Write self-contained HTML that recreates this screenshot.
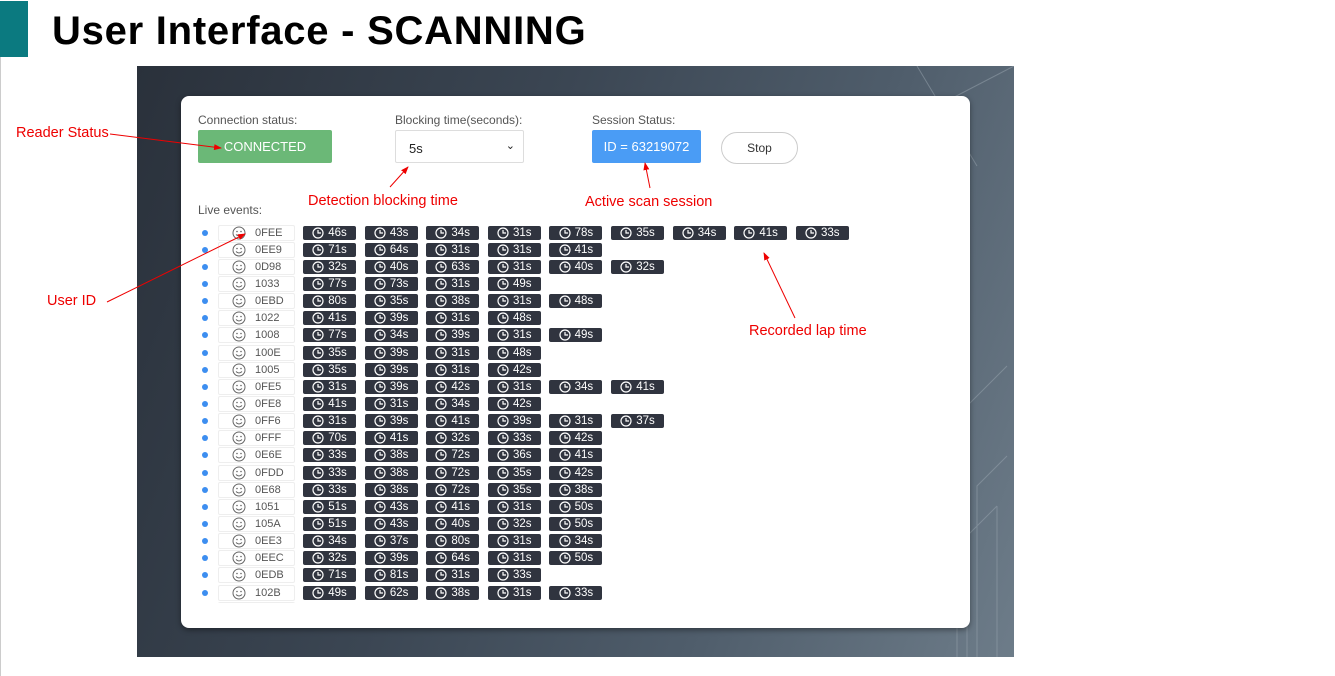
<!DOCTYPE html>
<html><head><meta charset="utf-8"><style>
*{margin:0;padding:0;box-sizing:border-box}
body{width:1335px;height:676px;background:#fff;position:relative;overflow:hidden;font-family:"Liberation Sans",Arial,sans-serif}
.bar{position:absolute;left:0;top:1px;width:28px;height:56px;background:#0b7a80}
.lline{position:absolute;left:0;top:57px;width:1px;height:619px;background:#ccc}
h1{position:absolute;left:52px;top:9px;font-size:40px;font-weight:bold;color:#000;letter-spacing:0.75px}
.bg{position:absolute;left:137px;top:66px;width:877px;height:591px;background:linear-gradient(110deg,#2a313b 0%,#3b4653 40%,#4f5d6b 70%,#6d7c89 100%);overflow:hidden}
.card{position:absolute;left:181px;top:96px;width:789px;height:532px;background:#fff;border-radius:8px;box-shadow:0 2px 6px rgba(0,0,0,.4)}
.lbl{position:absolute;font-size:12px;color:#555}
.btn{position:absolute;color:#fff;font-size:13px;display:flex;align-items:center;justify-content:center;border-radius:2px}
.rows{position:absolute;left:197px;top:224px;width:700px;height:379px;overflow:hidden}
.row{height:17.15px;display:flex;align-items:center}
.dot{width:6px;height:6px;border-radius:50%;background:#3d8ef0;margin-left:5px;margin-right:10px}
.id{width:77px;height:16px;border:1px solid #eee;border-radius:2px;display:flex;align-items:center;font-size:11px;color:#555;margin-right:8px}
.id svg{margin-left:13px;margin-right:9px}
.c{width:53px;height:14px;background:#30343f;border-radius:2px;color:#fff;font-size:11.5px;display:flex;align-items:center;justify-content:center;margin-right:8.6px;gap:4px}
.ann{position:absolute;color:#e00;font-size:14.5px}
</style></head><body>
<div class="bar"></div><div class="lline"></div>
<h1>User Interface - SCANNING</h1>
<div class="bg">
<svg width="877" height="591" style="position:absolute;left:0;top:0" stroke="#9aa6b0" stroke-width="1" fill="none" opacity=".5">
<path d="M840 591V420l30-30M860 591V440M800 40L877 0M780 0l60 100M820 591V480l40-40M870 300l-40 40v251"/>
</svg>
</div>
<div class="card">
<div class="lbl" style="left:17px;top:17px">Connection status:</div>
<div class="btn" style="left:17px;top:34px;width:134px;height:33px;background:#6bb877">CONNECTED</div>
<div class="lbl" style="left:214px;top:17px">Blocking time(seconds):</div>
<div style="position:absolute;left:214px;top:34px;width:129px;height:33px;border:1px solid #ddd;border-radius:2px;font-size:13px;color:#222;padding:10px 0 0 13px">5s<span style="position:absolute;right:8px;top:8px;font-size:11px">&#8964;</span></div>
<div class="lbl" style="left:411px;top:17px">Session Status:</div>
<div class="btn" style="left:411px;top:34px;width:109px;height:33px;background:#4a9cf5">ID = 63219072</div>
<div style="position:absolute;left:540px;top:36px;width:77px;height:32px;border:1px solid #ccc;border-radius:16px;font-size:12px;color:#333;display:flex;align-items:center;justify-content:center">Stop</div>
<div class="lbl" style="left:17px;top:107px">Live events:</div>
</div>
<svg width="0" height="0" style="position:absolute"><defs>
<symbol id="k" viewBox="0 0 12 12"><circle cx="6" cy="6" r="5" fill="none" stroke="#fff" stroke-width="1.2"/><path d="M6 3v3h3" fill="none" stroke="#fff" stroke-width="1.2"/></symbol>
<symbol id="f" viewBox="0 0 14 14"><circle cx="7" cy="7" r="6" fill="none" stroke="#666" stroke-width="1"/><circle cx="5" cy="5.5" r=".8" fill="#666"/><circle cx="9" cy="5.5" r=".8" fill="#666"/><path d="M4 8.5q3 3 6 0" fill="none" stroke="#666"/></symbol>
</defs></svg>
<div class="rows">
<div class="row"><i class="dot"></i><div class="id"><svg width="14" height="14"><use href="#f"/></svg>0FEE</div><div class="c"><svg width="12" height="12"><use href="#k"/></svg>46s</div><div class="c"><svg width="12" height="12"><use href="#k"/></svg>43s</div><div class="c"><svg width="12" height="12"><use href="#k"/></svg>34s</div><div class="c"><svg width="12" height="12"><use href="#k"/></svg>31s</div><div class="c"><svg width="12" height="12"><use href="#k"/></svg>78s</div><div class="c"><svg width="12" height="12"><use href="#k"/></svg>35s</div><div class="c"><svg width="12" height="12"><use href="#k"/></svg>34s</div><div class="c"><svg width="12" height="12"><use href="#k"/></svg>41s</div><div class="c"><svg width="12" height="12"><use href="#k"/></svg>33s</div></div>
<div class="row"><i class="dot"></i><div class="id"><svg width="14" height="14"><use href="#f"/></svg>0EE9</div><div class="c"><svg width="12" height="12"><use href="#k"/></svg>71s</div><div class="c"><svg width="12" height="12"><use href="#k"/></svg>64s</div><div class="c"><svg width="12" height="12"><use href="#k"/></svg>31s</div><div class="c"><svg width="12" height="12"><use href="#k"/></svg>31s</div><div class="c"><svg width="12" height="12"><use href="#k"/></svg>41s</div></div>
<div class="row"><i class="dot"></i><div class="id"><svg width="14" height="14"><use href="#f"/></svg>0D98</div><div class="c"><svg width="12" height="12"><use href="#k"/></svg>32s</div><div class="c"><svg width="12" height="12"><use href="#k"/></svg>40s</div><div class="c"><svg width="12" height="12"><use href="#k"/></svg>63s</div><div class="c"><svg width="12" height="12"><use href="#k"/></svg>31s</div><div class="c"><svg width="12" height="12"><use href="#k"/></svg>40s</div><div class="c"><svg width="12" height="12"><use href="#k"/></svg>32s</div></div>
<div class="row"><i class="dot"></i><div class="id"><svg width="14" height="14"><use href="#f"/></svg>1033</div><div class="c"><svg width="12" height="12"><use href="#k"/></svg>77s</div><div class="c"><svg width="12" height="12"><use href="#k"/></svg>73s</div><div class="c"><svg width="12" height="12"><use href="#k"/></svg>31s</div><div class="c"><svg width="12" height="12"><use href="#k"/></svg>49s</div></div>
<div class="row"><i class="dot"></i><div class="id"><svg width="14" height="14"><use href="#f"/></svg>0EBD</div><div class="c"><svg width="12" height="12"><use href="#k"/></svg>80s</div><div class="c"><svg width="12" height="12"><use href="#k"/></svg>35s</div><div class="c"><svg width="12" height="12"><use href="#k"/></svg>38s</div><div class="c"><svg width="12" height="12"><use href="#k"/></svg>31s</div><div class="c"><svg width="12" height="12"><use href="#k"/></svg>48s</div></div>
<div class="row"><i class="dot"></i><div class="id"><svg width="14" height="14"><use href="#f"/></svg>1022</div><div class="c"><svg width="12" height="12"><use href="#k"/></svg>41s</div><div class="c"><svg width="12" height="12"><use href="#k"/></svg>39s</div><div class="c"><svg width="12" height="12"><use href="#k"/></svg>31s</div><div class="c"><svg width="12" height="12"><use href="#k"/></svg>48s</div></div>
<div class="row"><i class="dot"></i><div class="id"><svg width="14" height="14"><use href="#f"/></svg>1008</div><div class="c"><svg width="12" height="12"><use href="#k"/></svg>77s</div><div class="c"><svg width="12" height="12"><use href="#k"/></svg>34s</div><div class="c"><svg width="12" height="12"><use href="#k"/></svg>39s</div><div class="c"><svg width="12" height="12"><use href="#k"/></svg>31s</div><div class="c"><svg width="12" height="12"><use href="#k"/></svg>49s</div></div>
<div class="row"><i class="dot"></i><div class="id"><svg width="14" height="14"><use href="#f"/></svg>100E</div><div class="c"><svg width="12" height="12"><use href="#k"/></svg>35s</div><div class="c"><svg width="12" height="12"><use href="#k"/></svg>39s</div><div class="c"><svg width="12" height="12"><use href="#k"/></svg>31s</div><div class="c"><svg width="12" height="12"><use href="#k"/></svg>48s</div></div>
<div class="row"><i class="dot"></i><div class="id"><svg width="14" height="14"><use href="#f"/></svg>1005</div><div class="c"><svg width="12" height="12"><use href="#k"/></svg>35s</div><div class="c"><svg width="12" height="12"><use href="#k"/></svg>39s</div><div class="c"><svg width="12" height="12"><use href="#k"/></svg>31s</div><div class="c"><svg width="12" height="12"><use href="#k"/></svg>42s</div></div>
<div class="row"><i class="dot"></i><div class="id"><svg width="14" height="14"><use href="#f"/></svg>0FE5</div><div class="c"><svg width="12" height="12"><use href="#k"/></svg>31s</div><div class="c"><svg width="12" height="12"><use href="#k"/></svg>39s</div><div class="c"><svg width="12" height="12"><use href="#k"/></svg>42s</div><div class="c"><svg width="12" height="12"><use href="#k"/></svg>31s</div><div class="c"><svg width="12" height="12"><use href="#k"/></svg>34s</div><div class="c"><svg width="12" height="12"><use href="#k"/></svg>41s</div></div>
<div class="row"><i class="dot"></i><div class="id"><svg width="14" height="14"><use href="#f"/></svg>0FE8</div><div class="c"><svg width="12" height="12"><use href="#k"/></svg>41s</div><div class="c"><svg width="12" height="12"><use href="#k"/></svg>31s</div><div class="c"><svg width="12" height="12"><use href="#k"/></svg>34s</div><div class="c"><svg width="12" height="12"><use href="#k"/></svg>42s</div></div>
<div class="row"><i class="dot"></i><div class="id"><svg width="14" height="14"><use href="#f"/></svg>0FF6</div><div class="c"><svg width="12" height="12"><use href="#k"/></svg>31s</div><div class="c"><svg width="12" height="12"><use href="#k"/></svg>39s</div><div class="c"><svg width="12" height="12"><use href="#k"/></svg>41s</div><div class="c"><svg width="12" height="12"><use href="#k"/></svg>39s</div><div class="c"><svg width="12" height="12"><use href="#k"/></svg>31s</div><div class="c"><svg width="12" height="12"><use href="#k"/></svg>37s</div></div>
<div class="row"><i class="dot"></i><div class="id"><svg width="14" height="14"><use href="#f"/></svg>0FFF</div><div class="c"><svg width="12" height="12"><use href="#k"/></svg>70s</div><div class="c"><svg width="12" height="12"><use href="#k"/></svg>41s</div><div class="c"><svg width="12" height="12"><use href="#k"/></svg>32s</div><div class="c"><svg width="12" height="12"><use href="#k"/></svg>33s</div><div class="c"><svg width="12" height="12"><use href="#k"/></svg>42s</div></div>
<div class="row"><i class="dot"></i><div class="id"><svg width="14" height="14"><use href="#f"/></svg>0E6E</div><div class="c"><svg width="12" height="12"><use href="#k"/></svg>33s</div><div class="c"><svg width="12" height="12"><use href="#k"/></svg>38s</div><div class="c"><svg width="12" height="12"><use href="#k"/></svg>72s</div><div class="c"><svg width="12" height="12"><use href="#k"/></svg>36s</div><div class="c"><svg width="12" height="12"><use href="#k"/></svg>41s</div></div>
<div class="row"><i class="dot"></i><div class="id"><svg width="14" height="14"><use href="#f"/></svg>0FDD</div><div class="c"><svg width="12" height="12"><use href="#k"/></svg>33s</div><div class="c"><svg width="12" height="12"><use href="#k"/></svg>38s</div><div class="c"><svg width="12" height="12"><use href="#k"/></svg>72s</div><div class="c"><svg width="12" height="12"><use href="#k"/></svg>35s</div><div class="c"><svg width="12" height="12"><use href="#k"/></svg>42s</div></div>
<div class="row"><i class="dot"></i><div class="id"><svg width="14" height="14"><use href="#f"/></svg>0E68</div><div class="c"><svg width="12" height="12"><use href="#k"/></svg>33s</div><div class="c"><svg width="12" height="12"><use href="#k"/></svg>38s</div><div class="c"><svg width="12" height="12"><use href="#k"/></svg>72s</div><div class="c"><svg width="12" height="12"><use href="#k"/></svg>35s</div><div class="c"><svg width="12" height="12"><use href="#k"/></svg>38s</div></div>
<div class="row"><i class="dot"></i><div class="id"><svg width="14" height="14"><use href="#f"/></svg>1051</div><div class="c"><svg width="12" height="12"><use href="#k"/></svg>51s</div><div class="c"><svg width="12" height="12"><use href="#k"/></svg>43s</div><div class="c"><svg width="12" height="12"><use href="#k"/></svg>41s</div><div class="c"><svg width="12" height="12"><use href="#k"/></svg>31s</div><div class="c"><svg width="12" height="12"><use href="#k"/></svg>50s</div></div>
<div class="row"><i class="dot"></i><div class="id"><svg width="14" height="14"><use href="#f"/></svg>105A</div><div class="c"><svg width="12" height="12"><use href="#k"/></svg>51s</div><div class="c"><svg width="12" height="12"><use href="#k"/></svg>43s</div><div class="c"><svg width="12" height="12"><use href="#k"/></svg>40s</div><div class="c"><svg width="12" height="12"><use href="#k"/></svg>32s</div><div class="c"><svg width="12" height="12"><use href="#k"/></svg>50s</div></div>
<div class="row"><i class="dot"></i><div class="id"><svg width="14" height="14"><use href="#f"/></svg>0EE3</div><div class="c"><svg width="12" height="12"><use href="#k"/></svg>34s</div><div class="c"><svg width="12" height="12"><use href="#k"/></svg>37s</div><div class="c"><svg width="12" height="12"><use href="#k"/></svg>80s</div><div class="c"><svg width="12" height="12"><use href="#k"/></svg>31s</div><div class="c"><svg width="12" height="12"><use href="#k"/></svg>34s</div></div>
<div class="row"><i class="dot"></i><div class="id"><svg width="14" height="14"><use href="#f"/></svg>0EEC</div><div class="c"><svg width="12" height="12"><use href="#k"/></svg>32s</div><div class="c"><svg width="12" height="12"><use href="#k"/></svg>39s</div><div class="c"><svg width="12" height="12"><use href="#k"/></svg>64s</div><div class="c"><svg width="12" height="12"><use href="#k"/></svg>31s</div><div class="c"><svg width="12" height="12"><use href="#k"/></svg>50s</div></div>
<div class="row"><i class="dot"></i><div class="id"><svg width="14" height="14"><use href="#f"/></svg>0EDB</div><div class="c"><svg width="12" height="12"><use href="#k"/></svg>71s</div><div class="c"><svg width="12" height="12"><use href="#k"/></svg>81s</div><div class="c"><svg width="12" height="12"><use href="#k"/></svg>31s</div><div class="c"><svg width="12" height="12"><use href="#k"/></svg>33s</div></div>
<div class="row"><i class="dot"></i><div class="id"><svg width="14" height="14"><use href="#f"/></svg>102B</div><div class="c"><svg width="12" height="12"><use href="#k"/></svg>49s</div><div class="c"><svg width="12" height="12"><use href="#k"/></svg>62s</div><div class="c"><svg width="12" height="12"><use href="#k"/></svg>38s</div><div class="c"><svg width="12" height="12"><use href="#k"/></svg>31s</div><div class="c"><svg width="12" height="12"><use href="#k"/></svg>33s</div></div>
<div class="row"><i class="dot" style="visibility:hidden"></i><div class="id"></div><div class="c"></div><div class="c"></div><div class="c"></div><div class="c"></div><div class="c"></div></div>
</div>
<div class="ann" style="left:16px;top:125px">Reader Status</div>
<div class="ann" style="left:308px;top:193px">Detection blocking time</div>
<div class="ann" style="left:585px;top:194px">Active scan session</div>
<div class="ann" style="left:47px;top:293px">User ID</div>
<div class="ann" style="left:749px;top:323px">Recorded lap time</div>
<svg width="1335" height="676" style="position:absolute;left:0;top:0" stroke="#e00" stroke-width="1" fill="#e00">
<defs><marker id="a" markerWidth="8" markerHeight="6" refX="7" refY="3" orient="auto"><path d="M0 0L8 3L0 6z" stroke="none"/></marker></defs>
<line x1="110" y1="134" x2="221" y2="148" marker-end="url(#a)"/>
<line x1="390" y1="187" x2="408" y2="167" marker-end="url(#a)"/>
<line x1="650" y1="188" x2="645" y2="163" marker-end="url(#a)"/>
<line x1="107" y1="302" x2="245" y2="234" marker-end="url(#a)"/>
<line x1="795" y1="318" x2="764" y2="253" marker-end="url(#a)"/>
</svg>
</body></html>
